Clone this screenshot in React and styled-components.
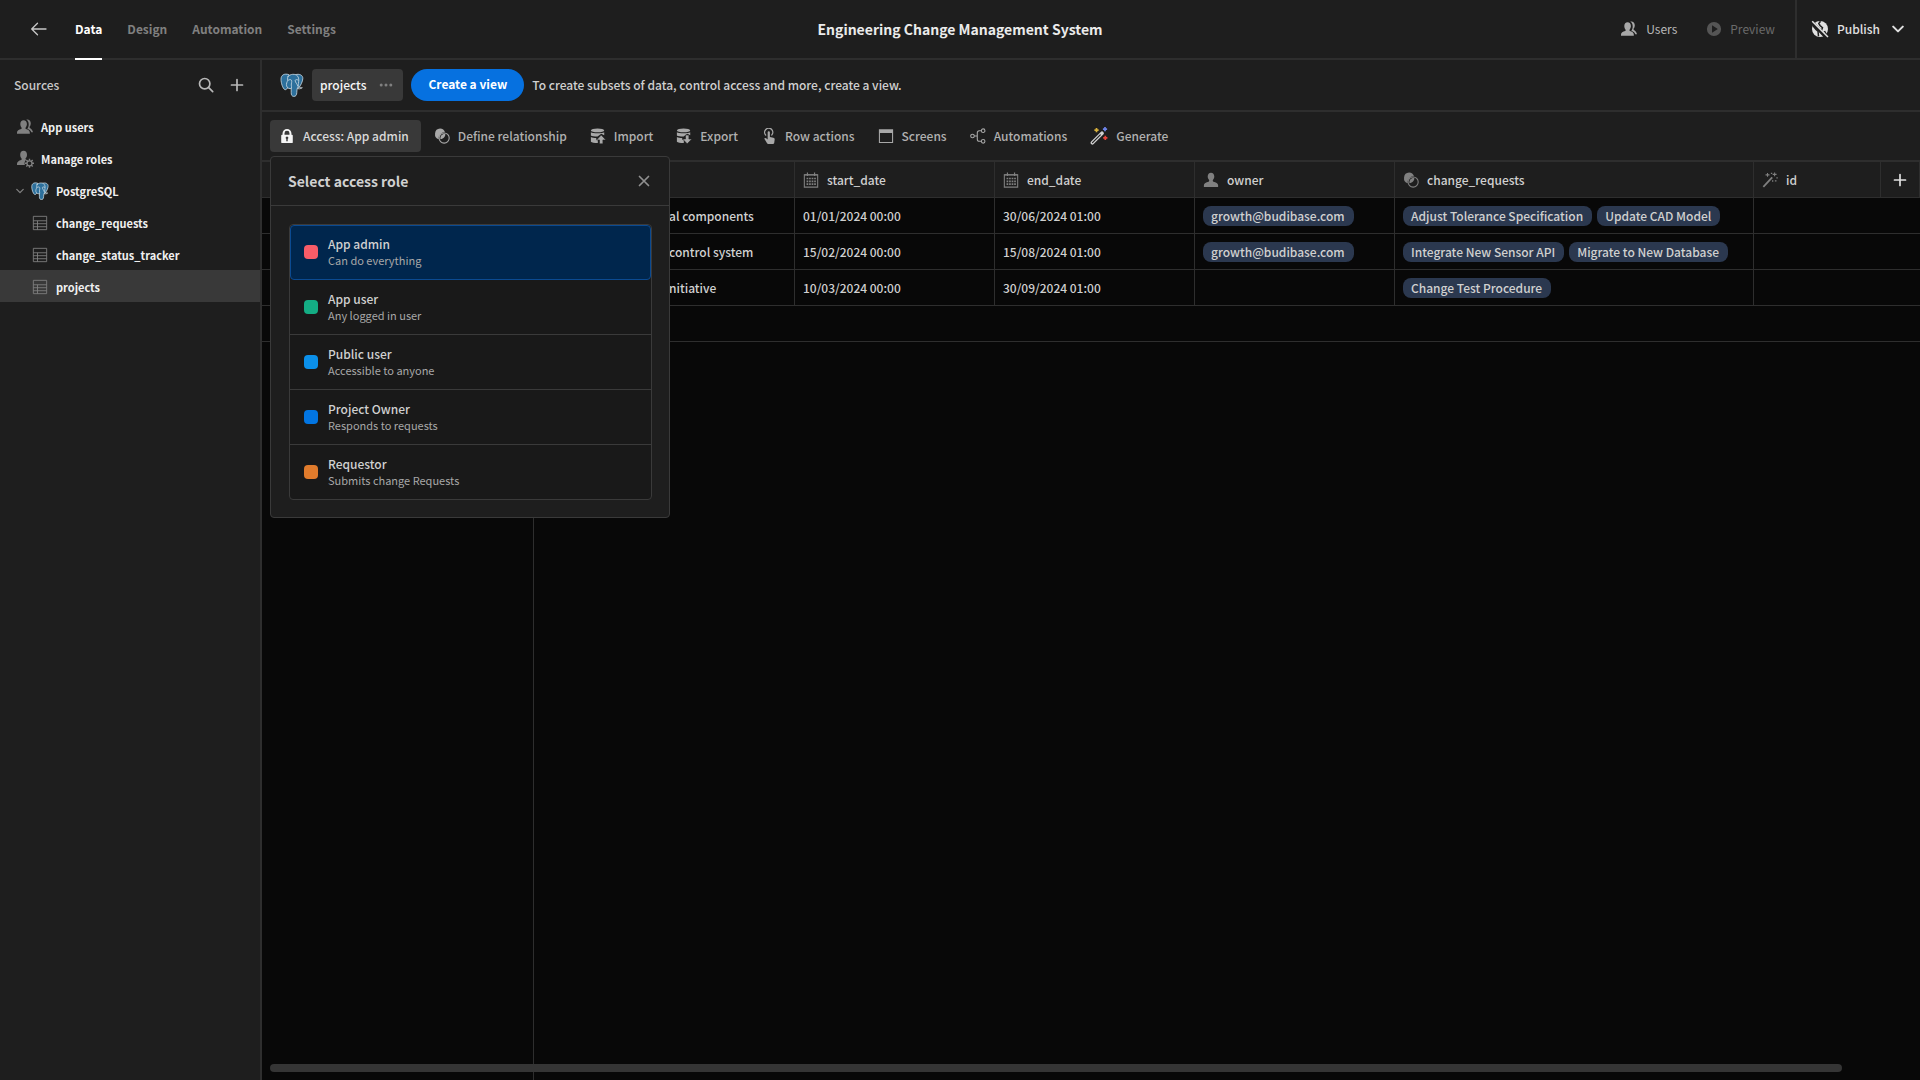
import React from "react";
import styled, { createGlobalStyle, css } from "styled-components";

const GlobalStyle = createGlobalStyle`
  *, *::before, *::after { box-sizing: border-box; }
  body {
    margin: 0;
    background: #080808;
    color: #d0d0d0;
    font-family: "Noto Sans CJK SC", "Open Sans", sans-serif;
    font-size: 12px;
    line-height: 16px;
  }
  button { font: inherit; color: inherit; background: none; border: 0; padding: 0; margin: 0; cursor: pointer; }
  a { color: inherit; text-decoration: none; }
  svg { display: block; flex: none; }
  h1, h2, h3, p, ul { margin: 0; padding: 0; font: inherit; list-style: none; }
`;

const line = "#2e2e2e";

/* ---------- icons ---------- */

const Svg = ({ size = 18, children, ...rest }) => (
  <svg width={size} height={size} viewBox="0 0 18 18" fill="currentColor" aria-hidden="true" {...rest}>
    {children}
  </svg>
);

const ArrowLeft = () => (
  <Svg fill="none" stroke="currentColor" strokeWidth="1.3" strokeLinecap="round" strokeLinejoin="round">
    <path d="M16 9H2M7.500 3.200 1.700 9l5.800 5.800" />
  </Svg>
);
const Search = () => (
  <Svg fill="none" stroke="currentColor" strokeWidth="1.7" strokeLinecap="round">
    <circle cx="7.700" cy="7.700" r="5.200" />
    <path d="m11.700 11.700 4 4" />
  </Svg>
);
const Plus = () => (
  <Svg fill="none" stroke="currentColor" strokeWidth="1.7" strokeLinecap="round">
    <path d="M9 3.500v11M3.500 9h11" />
  </Svg>
);
const Users = () => (
  <Svg>
    <path d="M7.600 2.200c2 0 3.300 1.600 3.300 3.900 0 1.300-.5 2.500-1.200 3.300-.3.400-.3 1.300.2 1.500 2.200.7 3.900 1.700 3.900 3.500v1.400H1v-1.400c0-1.800 1.900-2.800 4.200-3.500.6-.2.6-1.100.2-1.500-.7-.8-1.100-2-1.100-3.300 0-2.300 1.300-3.900 3.300-3.900Z" />
    <path d="M10.200 1.600c2.400-.7 4.600.9 4.600 3.700 0 1.400-.4 2.500-1.100 3.300-.3.400-.2 1 .2 1.300 1.400 1 2.900 2.200 3.100 4.400h-1.700c-.3-1.700-1.800-2.800-3.900-3.600.8-1.200 1.300-2.600 1.300-4.300 0-2.200-.9-4-2.500-4.800Z" />
  </Svg>
);
const User = () => (
  <Svg size={16}>
    <path d="M9 .8c2.200 0 3.700 1.800 3.700 4.300 0 1.500-.5 2.800-1.400 3.700-.5.6-.4 1.900.4 2.200 2.800.7 5.300 1.800 5.300 4v2H1v-2c0-2.200 2.500-3.300 5.300-4 .8-.3.900-1.600.4-2.200-.9-.9-1.400-2.200-1.400-3.700C5.300 2.600 6.800.8 9 .8Z" />
  </Svg>
);
const UserGear = () => (
  <Svg>
    <path d="M7.600.8c2.100 0 3.400 1.600 3.400 3.900 0 1.400-.5 2.500-1.200 3.400-.4.500-.4 1.300.3 1.600-1.500 1.400-1.900 3.500-1.200 5.400H1v-1.300c0-1.800 1.900-3.100 4.200-3.700.6-.2.6-1.300.2-1.900-.8-.8-1.200-2-1.200-3.400 0-2.400 1.300-4 3.400-4Z" />
    <circle cx="13.500" cy="13.300" r="2.500" fill="none" stroke="currentColor" strokeWidth="1.300" />
    <path d="M13.500 8.800v2M13.500 15.800v2M9 13.300h2M16 13.300h2M10.300 10.100l1.500 1.500M15.200 15l1.500 1.500M10.300 16.500l1.500-1.500M15.200 11.600l1.500-1.500" stroke="currentColor" strokeWidth="1.400" />
  </Svg>
);
const ChevronDown = ({ size = 10, weight = 1.6 }) => (
  <svg width={size} height={size} viewBox="0 0 10 10" fill="none" stroke="currentColor" strokeWidth={weight} strokeLinecap="round" strokeLinejoin="round" aria-hidden="true">
    <path d="M1 3l4 4 4-4" />
  </svg>
);
const TableIcon = () => (
  <Svg size={16} fill="none" stroke="currentColor" strokeWidth="1">
    <path d="M1.500 1.500h15v15h-15zM1.500 6.500h15M1.500 9.800h15M1.500 13.200h15M6.200 6.500v10" />
  </Svg>
);
const Lock = () => (
  <Svg size={16}>
    <path fillRule="evenodd" d="M4 7.500V6a5 5 0 0 1 10 0v1.500h.5c.6 0 1 .4 1 1V16c0 .6-.4 1-1 1h-11c-.6 0-1-.4-1-1V8.500c0-.6.4-1 1-1H4Zm2.200 0h5.600V6a2.800 2.800 0 0 0-5.600 0v1.500Zm2 4.900V15h1.600v-2.600a1.500 1.500 0 1 0-1.600 0Z" />
  </Svg>
);
const Relationship = () => (
  <Svg size={16}>
    <path d="M6.800.7a6 6 0 0 1 5.600 4.200 6.500 6.500 0 0 0-7 7.700A6.100 6.100 0 0 1 6.800.7Z" />
    <path d="M12.700 6.600c.3 3-1.600 5.700-5.500 6-.3-3.400 1.900-6.100 5.500-6Z" />
    <circle cx="11.400" cy="11.300" r="5.700" fill="none" stroke="currentColor" strokeWidth="1.200" />
  </Svg>
);
const Cylinder = () => (
  <>
    <ellipse cx="8.500" cy="2.700" rx="7.500" ry="2.200" />
    <path d="M1 4.700c2 1.700 13 1.700 15 0v3.500l-3.300-1.600-4.200 3.100c-3.500 0-6.500-.5-7.500-1.200V4.700Z" />
    <path d="M1 10c1.500.8 3.500 1.100 6 1.200v1.800h1.800v4C5 17 1.800 16.400 1 15.400V10Z" />
  </>
);
const Import = () => (
  <Svg size={16}>
    <Cylinder />
    <path d="m12.600 8 5.200 5.400h-3.300v4.400h-3.800v-4.400H7.400z" stroke="#1e1e1e" strokeWidth=".6" />
  </Svg>
);
const Export = () => (
  <Svg size={16}>
    <Cylinder />
    <path d="M10.700 8h3.800v4.400h3.300l-5.200 5.400-5.200-5.400h3.300z" stroke="#1e1e1e" strokeWidth=".6" />
  </Svg>
);
const Touch = () => (
  <Svg size={16}>
    <path d="M7.500 4.800c0-1.700 2.500-1.700 2.500 0V10l3.900.9c1 .2 1.600 1 1.500 2l-.5 3.700c-.1.800-.5 1.300-1.200 1.300H8.100c-.6 0-1-.3-1.300-.8l-3.200-5.200c.8-1 2-.8 2.900.1l1 1V4.800Z" />
    <path d="M5.300 8A4.600 4.600 0 1 1 12.200 7.800" fill="none" stroke="currentColor" strokeWidth="1.500" strokeLinecap="round" />
  </Svg>
);
const Screen = () => (
  <Svg size={16}>
    <path fillRule="evenodd" d="M1 1.500h16v15.500H1V1.500Zm1.200 4v10.300h13.600V5.500H2.200Z" />
  </Svg>
);
const Branch = () => (
  <Svg size={16} fill="none" stroke="currentColor" strokeWidth="1.200">
    <circle cx="2.800" cy="9" r="2" />
    <circle cx="14.800" cy="3" r="2" />
    <circle cx="14.800" cy="15" r="2" />
    <path d="M4.800 9h3.400M12.800 3h-2.300C9 3 8.200 3.800 8.200 5.300v7.400c0 1.500.8 2.300 2.300 2.300h2.300" />
  </Svg>
);
const ColorWand = () => (
  <Svg fill="none">
    <path d="M2.400 15.800 12 6.200" stroke="#d0d0d0" strokeWidth="3.600" strokeLinecap="round" />
    <path d="m2.500 15.700 7.800-7.800" stroke="#1e1e1e" strokeWidth="1.200" strokeLinecap="round" />
    <path d="M6.500 1v4.200M4.400 3.100h4.200" stroke="#d8b13c" strokeWidth="1.700" />
    <path d="M15 0v4.200M12.900 2.100h4.200" stroke="#6d83e8" strokeWidth="1.700" />
    <path d="M15.300 8.700v4.200M13.200 10.800h4.200" stroke="#e8443a" strokeWidth="1.700" />
  </Svg>
);
const Wand = () => (
  <Svg size={16} fill="none" stroke="currentColor">
    <path d="M1.500 16.800 11.500 6" strokeWidth="2" />
    <path d="M6.200 1v4.400M4 3.200h4.400M14.200.5v4.400M12 2.700h4.400" strokeWidth="1.200" />
    <path d="M14.500 10h1.800M12 9.200v1.800M16.200 6.500h1.500M10 1.500h1.500" strokeWidth="1.400" />
  </Svg>
);
const Calendar = () => (
  <Svg size={16} fill="none" stroke="currentColor">
    <path d="M1.500 3h15v14h-15z" strokeWidth="1.200" />
    <path d="M5 .5v4M13 .5v4M1.500 3.200h15" strokeWidth="1.300" />
    <path d="M4 7.300h10.500M4 10.500h10.500M4 13.700h10.500" strokeWidth="1.900" strokeDasharray="1.900 .96" />
  </Svg>
);
const Play = () => (
  <Svg size={16}>
    <path fillRule="evenodd" d="M9 1a8 8 0 1 1 0 16A8 8 0 0 1 9 1ZM6.800 4.900v8.200L13.300 9 6.800 4.900Z" />
  </Svg>
);
const GlobeOff = () => (
  <Svg>
    <circle cx="9" cy="9" r="8" />
    <path d="M9.500 1.200 7.800 3.500l1.200 2 2.500 2.300-1 2.500M1.800 5.500l3.200 4 2 1.800.5 5M13.500 11l1.800 3.500" fill="none" stroke="#1e1e1e" strokeWidth="1.500" />
    <path d="m0 1.500 15.500 16" stroke="#1e1e1e" strokeWidth="3.600" />
    <path d="m1.200 1.200 15.800 15.800" stroke="currentColor" strokeWidth="1.500" />
  </Svg>
);
const Cross = () => (
  <svg width="12" height="12" viewBox="0 0 12 12" fill="none" stroke="currentColor" strokeWidth="1.700" strokeLinecap="round" aria-hidden="true">
    <path d="m1.500 1.500 9 9M10.500 1.500l-9 9" />
  </svg>
);
const Dots = () => (
  <svg width="14" height="4" viewBox="0 0 14 4" fill="currentColor" aria-hidden="true">
    <circle cx="2.200" cy="2" r="1.500" />
    <circle cx="7" cy="2" r="1.500" />
    <circle cx="11.800" cy="2" r="1.500" />
  </svg>
);
const Elephant = ({ size, weight }) => (
  <svg width={size} height={size} viewBox="0 0 24 24" fill="#2d709c" stroke="#cfdde6" strokeWidth={weight} strokeLinejoin="round" strokeLinecap="round" aria-hidden="true">
    <path d="M8.500 1.500C4.200.2 1 2 1 6.300c0 3.500 1.700 9.200 3.800 10.300 1.300.6 2.600-1.300 3.700-2.600L9 2Z" />
    <path d="M15.500 1.700c4-1.400 7.600.6 7.300 4-.2 2.800-1.900 6.300-4 9.300h-3Z" />
    <path d="M16.500 15.300c1.800.9 4.200.7 5.800-.6-1 .1-2.200 0-2.700-.6" fill="none" />
    <path d="M8 3.500c2-2.600 7.500-3.200 9.700-.3 1.700 2.300 1 5.300.7 7.300-.2 1.500.4 2.500-.4 3.700-1 1.400-1.100 3-1.200 5.300-.1 2.600-1 4-3 3.900-2-.1-2.600-1.500-2.600-3.700v-4.200c-1.600.4-3.100-.1-4-1.300-1.200-1.700-.8-4 0-5.500C8 7 7.100 5.400 8 3.500Z" />
    <path d="M8.300 7.200c1.200-.8 2.700-.9 3.200.1.600 1.500-.3 3.300-.2 4.800.1 1.200.4 2 .2 3.200M18 7c-1.200-.7-2.600-.5-2.800.5-.1 2 2.300 3.500 2.600 5.500" fill="none" />
  </svg>
);

/* ---------- layout ---------- */

const Shell = styled.div`
  display: flex;
  flex-direction: column;
  height: 100vh;
  overflow: hidden;
`;

const TopBar = styled.header`
  display: grid;
  grid-template-columns: 1fr auto 1fr;
  flex: none;
  height: 60px;
  background: #1e1e1e;
  border-bottom: 2px solid ${line};
`;
const TopLeft = styled.nav`
  display: flex;
  align-items: stretch;
  gap: 25px;
  padding-left: 30px;
`;
const BackButton = styled.button`
  display: flex;
  align-items: center;
  width: 20px;
  color: #c8c8c8;
`;
const Tab = styled.a`
  display: flex;
  align-items: center;
  margin-bottom: -2px;
  border-bottom: 2px solid ${(p) => (p.$active ? "#ffffff" : "transparent")};
  font-weight: 700;
  color: ${(p) => (p.$active ? "#ffffff" : "#808080")};
`;
const AppTitle = styled.h1`
  align-self: center;
  font-size: 14px;
  font-weight: 700;
  color: #ebebeb;
`;
const TopRight = styled.div`
  display: flex;
  justify-content: flex-end;
`;
const TopAction = styled.button`
  display: flex;
  align-items: center;
  gap: 8px;
  margin-right: 29px;
  color: ${(p) => (p.disabled ? "#6a6a6a" : "#b8b8b8")};
  svg { color: ${(p) => (p.disabled ? "#555555" : "#a8a8a8")}; }
  &:last-of-type { margin-right: 20px; }
`;
const Publish = styled.div`
  display: flex;
  border-left: 2px solid ${line};
  button {
    display: flex;
    align-items: center;
    gap: 8px;
    padding: 0 16px 0 14px;
    font-weight: 500;
    color: #e0e0e0;
  }
  button svg:last-child { margin-left: 4px; }
`;

const Body = styled.div`
  display: flex;
  flex: 1;
  min-height: 0;
`;
const Sidebar = styled.aside`
  flex: none;
  width: 262px;
  background: #1e1e1e;
  border-right: 2px solid ${line};
`;
const SideHead = styled.div`
  display: flex;
  align-items: center;
  gap: 13px;
  height: 50px;
  padding: 0 14px;
  color: #b8b8b8;
  h2 { flex: 1; font-size: 12px; font-weight: 500; color: #c8c8c8; }
`;
const NavRow = styled.a`
  display: flex;
  align-items: center;
  gap: 8px;
  height: 32px;
  padding-top: 1px;
  padding-left: ${(p) => p.$indent || 17}px;
  font-size: 11px;
  font-weight: 700;
  color: #f0f0f0;
  background: ${(p) => (p.$active ? "#393939" : "transparent")};
  svg { color: #808080; }
`;
const IconSlot = styled.span`
  display: flex;
  justify-content: center;
  width: 16px;
`;

const Main = styled.main`
  position: relative;
  display: flex;
  flex: 1;
  flex-direction: column;
  min-width: 0;
`;
const ViewBar = styled.div`
  display: flex;
  align-items: center;
  gap: 8px;
  flex: none;
  height: 52px;
  padding: 0 18px;
  background: #1e1e1e;
  border-bottom: 2px solid ${line};
  font-weight: 500;
`;
const ViewTab = styled.button`
  display: flex;
  align-items: center;
  gap: 13px;
  height: 32px;
  padding: 0 10px 0 8px;
  border-radius: 4px;
  background: #393939;
  font-weight: 500;
  color: #f5f5f5;
  svg { color: #808080; }
`;
const CreateView = styled.button`
  height: 32px;
  padding: 0 17px 2px;
  border-radius: 16px;
  background: #0671e0;
  color: #ffffff;
  font-weight: 700;
`;
const Toolbar = styled.div`
  display: flex;
  align-items: center;
  gap: 4px;
  flex: none;
  height: 50px;
  padding: 0 8px;
  background: #1e1e1e;
  border-bottom: 2px solid ${line};
`;
const Tool = styled.button`
  display: flex;
  align-items: center;
  gap: 8px;
  height: 32px;
  padding: 0 10px 0 9px;
  border-radius: 4px;
  font-weight: 500;
  color: #b0b0b0;
  svg { color: #a8a8a8; }
  ${(p) =>
    p.$active &&
    css`
      padding-right: 12px;
      background: #393939;
      color: #dadada;
      svg { color: #f5f5f5; }
    `}
`;

const Table = styled.table`
  flex: none;
  width: 100%;
  table-layout: fixed;
  border-collapse: separate;
  border-spacing: 0;
  th, td {
    height: 36px;
    padding: 0 8px;
    border-bottom: 1px solid ${line};
    border-right: 1px solid ${line};
    text-align: left;
    font-weight: 500;
    white-space: nowrap;
    overflow: hidden;
  }
  th { background: #1e1e1e; }
  td:nth-child(7), td:nth-child(8), td[colspan] { border-right: 0; }
  td:nth-child(2) { padding-left: 135px; }
`;
const Head = styled.span`
  display: flex;
  align-items: center;
  gap: 8px;
  svg { color: #808080; }
`;
const AddColumn = styled.button`
  display: flex;
  margin: 0 auto;
  color: #e0e0e0;
`;
const Pills = styled.div`
  display: flex;
  gap: 5px;
`;
const Pill = styled.span`
  padding: 2px 9px 2px 8px;
  border-radius: 8px;
  background: #2b384f;
`;
const Rest = styled.div`
  flex: 1;
  width: 272px;
  border-right: 1px solid ${line};
`;
const ScrollThumb = styled.div`
  position: absolute;
  left: 8px;
  right: 78px;
  bottom: 8px;
  height: 8px;
  border-radius: 4px;
  background: #353535;
`;

const Popover = styled.section`
  position: absolute;
  top: 96px;
  left: 8px;
  width: 400px;
  border: 1px solid #3a3a3a;
  border-radius: 4px;
  background: #1e1e1e;
  color: #d0d0d0;
`;
const PopHead = styled.div`
  display: flex;
  align-items: center;
  justify-content: space-between;
  height: 49px;
  padding: 0 19px 0 17px;
  border-bottom: 1px solid #3a3a3a;
  h2 { font-size: 14px; font-weight: 700; }
  button { color: #909090; }
`;
const RoleList = styled.ul`
  margin: 18px 17px 17px 18px;
  border: 1px solid #3a3a3a;
  border-radius: 4px;
  background: #191919;
`;
const Role = styled.button`
  display: flex;
  align-items: center;
  gap: 10px;
  width: 100%;
  height: 55px;
  padding: 0 14px;
  text-align: left;
  border-bottom: 1px solid #3a3a3a;
  li:last-child & { height: 54px; border-bottom: 0; }
  ${(p) =>
    p.$selected &&
    css`
      border: 1px solid #0b4a91;
      border-radius: 4px;
      background: #00264d;
      padding: 0 13px 2px;
    `}
`;
const Swatch = styled.span`
  width: 14px;
  height: 14px;
  border-radius: 4px;
  background: ${(p) => p.$color};
`;
const RoleText = styled.span`
  display: grid;
  font-weight: 500;
  small { font-size: 11px; font-weight: 400; color: #a8a8a8; }
`;

/* ---------- data ---------- */

const tools = [
  ["Access: App admin", Lock],
  ["Define relationship", Relationship],
  ["Import", Import],
  ["Export", Export],
  ["Row actions", Touch],
  ["Screens", Screen],
  ["Automations", Branch],
  ["Generate", ColorWand],
];
const rows = [
  ["al components", "01/01/2024 00:00", "30/06/2024 01:00", ["growth@budibase.com"], ["Adjust Tolerance Specification", "Update CAD Model"]],
  ["control system", "15/02/2024 00:00", "15/08/2024 01:00", ["growth@budibase.com"], ["Integrate New Sensor API", "Migrate to New Database"]],
  ["nitiative", "10/03/2024 00:00", "30/09/2024 01:00", [], ["Change Test Procedure"]],
];
const roles = [
  ["App admin", "Can do everything", "#f75c68"],
  ["App user", "Any logged in user", "#14ad84"],
  ["Public user", "Accessible to anyone", "#0b90ea"],
  ["Project Owner", "Responds to requests", "#0275e2"],
  ["Requestor", "Submits change Requests", "#e07b2c"],
];
const columns = [
  ["start_date", Calendar],
  ["end_date", Calendar],
  ["owner", User],
  ["change_requests", Relationship],
  ["id", Wand],
];

const PillList = ({ items }) => (
  <Pills>
    {items.map((t) => (
      <Pill key={t}>{t}</Pill>
    ))}
  </Pills>
);

export default function App() {
  return (
    <Shell>
      <GlobalStyle />
      <TopBar>
        <TopLeft>
          <BackButton aria-label="Back"><ArrowLeft /></BackButton>
          {["Data", "Design", "Automation", "Settings"].map((t) => (
            <Tab key={t} href="#" $active={t === "Data"}>{t}</Tab>
          ))}
        </TopLeft>
        <AppTitle>Engineering Change Management System</AppTitle>
        <TopRight>
          <TopAction><Users />Users</TopAction>
          <TopAction disabled><Play />Preview</TopAction>
          <Publish>
            <button><GlobeOff />Publish<ChevronDown size={12} weight={1.7} /></button>
          </Publish>
        </TopRight>
      </TopBar>
      <Body>
        <Sidebar>
          <SideHead>
            <h2>Sources</h2>
            <button aria-label="Search"><Search /></button>
            <button aria-label="Add source"><Plus /></button>
          </SideHead>
          <nav>
            <NavRow href="#"><IconSlot><Users /></IconSlot>App users</NavRow>
            <NavRow href="#"><IconSlot><UserGear /></IconSlot>Manage roles</NavRow>
            <NavRow href="#" $indent={16}>
              <ChevronDown size={8} />
              <IconSlot><Elephant size={18} weight={1} /></IconSlot>PostgreSQL
            </NavRow>
            {["change_requests", "change_status_tracker", "projects"].map((t) => (
              <NavRow key={t} href="#" $indent={32} $active={t === "projects"}>
                <IconSlot><TableIcon /></IconSlot>{t}
              </NavRow>
            ))}
          </nav>
        </Sidebar>
        <Main>
          <ViewBar>
            <Elephant size={24} weight={0.8} />
            <ViewTab>projects<Dots /></ViewTab>
            <CreateView>Create a view</CreateView>
            <p>To create subsets of data, control access and more, create a view.</p>
          </ViewBar>
          <Toolbar>
            {tools.map(([label, Icon], i) => (
              <Tool key={label} $active={i === 0}><Icon />{label}</Tool>
            ))}
          </Toolbar>
          <Table>
            <colgroup>
              {[272, 261, 200, 200, 200, 359, null, 39].map((w, i) => (
                <col key={i} width={w ?? undefined} />
              ))}
            </colgroup>
            <thead>
              <tr>
                <th />
                <th />
                {columns.map(([name, Icon]) => (
                  <th key={name}><Head><Icon />{name}</Head></th>
                ))}
                <th><AddColumn aria-label="Add column"><Plus /></AddColumn></th>
              </tr>
            </thead>
            <tbody>
              {rows.map(([name, start, end, owners, changes]) => (
                <tr key={name}>
                  <td />
                  <td>{name}</td>
                  <td>{start}</td>
                  <td>{end}</td>
                  <td><PillList items={owners} /></td>
                  <td><PillList items={changes} /></td>
                  <td />
                  <td />
                </tr>
              ))}
              <tr><td colSpan={8} /></tr>
            </tbody>
          </Table>
          <Rest />
          <ScrollThumb />
          <Popover aria-label="Select access role">
            <PopHead>
              <h2>Select access role</h2>
              <button aria-label="Close"><Cross /></button>
            </PopHead>
            <RoleList>
              {roles.map(([name, info, color], i) => (
                <li key={name}>
                  <Role $selected={i === 0}>
                    <Swatch $color={color} />
                    <RoleText>{name}<small>{info}</small></RoleText>
                  </Role>
                </li>
              ))}
            </RoleList>
          </Popover>
        </Main>
      </Body>
    </Shell>
  );
}
